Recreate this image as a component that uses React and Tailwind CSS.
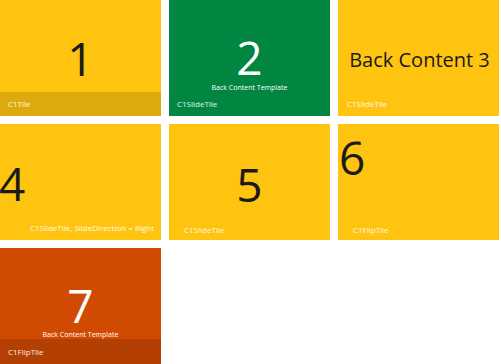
const font = { fontFamily: '"Open Sans", "Noto Sans", sans-serif' };

function Label({ children, className = '' }) {
  return (
    <div className={`text-[8px] leading-none text-white/90 ${className}`}>{children}</div>
  );
}

const num = 'text-[46px] font-normal leading-[36px]';

export default function App() {
  return (
    <div className="w-[501px] h-[364px] bg-white overflow-hidden" style={font}>
      <div className="grid grid-cols-[161px_161px_161px] grid-rows-[116px_116px_116px] gap-x-[8px] gap-y-[8px]">
        {/* 1 - C1Tile */}
        <div className="bg-[#fec40f] flex flex-col">
          <div className="h-[92px] flex flex-col items-center pt-[40px]">
            <div className={`${num} text-[#1a1a1a]`}>1</div>
          </div>
          <div className="flex-1 bg-[#dcaa0d] flex items-center px-[8px]">
            <Label>C1Tile</Label>
          </div>
        </div>

        {/* 2 - C1SlideTile */}
        <div className="bg-[#008641] flex flex-col items-center pt-[39px]">
          <div className={`${num} text-white`}>2</div>
          <div className="text-[7px] text-white mt-[9px] leading-none">Back Content Template</div>
          <Label className="self-start ml-[8px] mt-[9px]">C1SlideTile</Label>
        </div>

        {/* 3 - C1SlideTile */}
        <div className="bg-[#fec40f] flex flex-col pl-[2px] pt-[50px]">
          <div className="text-center text-[20px] text-[#1a1a1a] leading-none">Back Content 3</div>
          <Label className="ml-[7px] mt-[30px]">C1SlideTile</Label>
        </div>

        {/* 4 - C1SlideTile right */}
        <div className="bg-[#fec40f] flex flex-col pt-[41px]">
          <div className={`${num} text-[#1a1a1a] -ml-[1px]`}>4</div>
          <Label className="self-end mr-[7px] mt-[23px] text-[7px]">C1SlideTile, SlideDirection = Right</Label>
        </div>

        {/* 5 - C1SlideTile */}
        <div className="bg-[#fec40f] flex flex-col pt-[42px]">
          <div className={`${num} text-[#1a1a1a] text-center`}>5</div>
          <Label className="ml-[15px] mt-[24px]">C1SlideTile</Label>
        </div>

        {/* 6 - C1FlipTile */}
        <div className="bg-[#fec40f] flex flex-col pt-[15px]">
          <div className={`${num} text-[#1a1a1a] pl-[1px]`}>6</div>
          <Label className="ml-[15px] mt-[51px]">C1FlipTile</Label>
        </div>

        {/* 7 - C1FlipTile */}
        <div className="bg-[#d04a02] flex flex-col">
          <div className="h-[91px] flex flex-col items-center pt-[39px]">
            <div className={`${num} text-white`}>7</div>
            <div className="text-[7px] text-white mt-[8px] leading-none">Back Content Template</div>
          </div>
          <div className="flex-1 bg-[#b33f02] flex items-center px-[8px]">
            <Label>C1FlipTile</Label>
          </div>
        </div>
      </div>
    </div>
  );
}
